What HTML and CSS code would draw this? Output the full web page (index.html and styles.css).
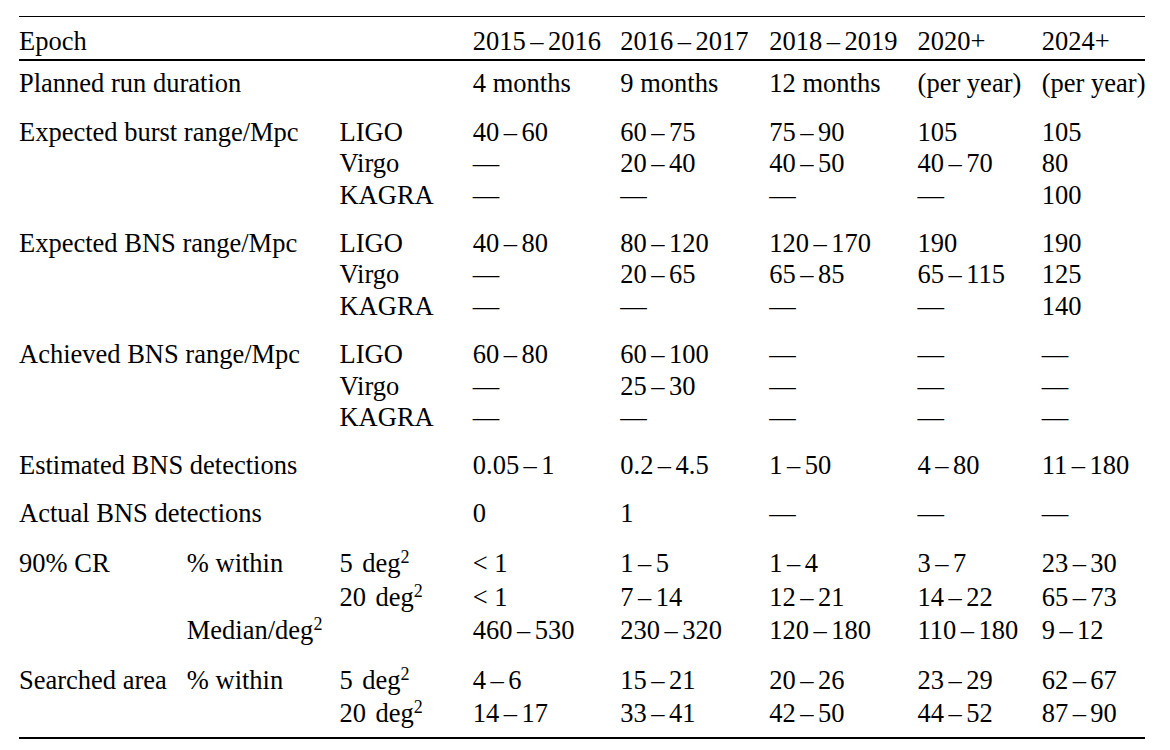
FILE: index.html
```html
<!DOCTYPE html>
<html lang="en">
<head>
<meta charset="utf-8">
<title>Observing scenarios</title>
<link rel="stylesheet" href="styles.css">
</head>
<body>
<table class="tbl">
  <colgroup>
    <col class="c1"><col class="c2"><col class="c3"><col class="c4"><col class="c5"><col class="c6"><col class="c7"><col class="c8">
  </colgroup>
  <thead>
    <tr>
      <th>Epoch</th><th></th><th></th>
      <th>2015<span class="d">–</span>2016</th>
      <th>2016<span class="d">–</span>2017</th>
      <th>2018<span class="d">–</span>2019</th>
      <th>2020+</th>
      <th>2024+</th>
    </tr>
  </thead>
  <tbody>
    <tr class="first">
      <td colspan="3">Planned run duration</td>
      <td>4 months</td><td>9 months</td><td>12 months</td><td>(per year)</td><td>(per year)</td>
    </tr>

    <tr class="grp">
      <td colspan="2">Expected burst range/Mpc</td><td>LIGO</td>
      <td>40<span class="d">–</span>60</td><td>60<span class="d">–</span>75</td><td>75<span class="d">–</span>90</td><td>105</td><td>105</td>
    </tr>
    <tr>
      <td></td><td></td><td>Virgo</td>
      <td>—</td><td>20<span class="d">–</span>40</td><td>40<span class="d">–</span>50</td><td>40<span class="d">–</span>70</td><td>80</td>
    </tr>
    <tr>
      <td></td><td></td><td>KAGRA</td>
      <td>—</td><td>—</td><td>—</td><td>—</td><td>100</td>
    </tr>

    <tr class="grp">
      <td colspan="2">Expected BNS range/Mpc</td><td>LIGO</td>
      <td>40<span class="d">–</span>80</td><td>80<span class="d">–</span>120</td><td>120<span class="d">–</span>170</td><td>190</td><td>190</td>
    </tr>
    <tr>
      <td></td><td></td><td>Virgo</td>
      <td>—</td><td>20<span class="d">–</span>65</td><td>65<span class="d">–</span>85</td><td>65<span class="d">–</span>115</td><td>125</td>
    </tr>
    <tr>
      <td></td><td></td><td>KAGRA</td>
      <td>—</td><td>—</td><td>—</td><td>—</td><td>140</td>
    </tr>

    <tr class="grp">
      <td colspan="2">Achieved BNS range/Mpc</td><td>LIGO</td>
      <td>60<span class="d">–</span>80</td><td>60<span class="d">–</span>100</td><td>—</td><td>—</td><td>—</td>
    </tr>
    <tr>
      <td></td><td></td><td>Virgo</td>
      <td>—</td><td>25<span class="d">–</span>30</td><td>—</td><td>—</td><td>—</td>
    </tr>
    <tr>
      <td></td><td></td><td>KAGRA</td>
      <td>—</td><td>—</td><td>—</td><td>—</td><td>—</td>
    </tr>

    <tr class="grp">
      <td colspan="3">Estimated BNS detections</td>
      <td>0.05<span class="d">–</span>1</td><td>0.2<span class="d">–</span>4.5</td><td>1<span class="d">–</span>50</td><td>4<span class="d">–</span>80</td><td>11<span class="d">–</span>180</td>
    </tr>

    <tr class="grp">
      <td colspan="3">Actual BNS detections</td>
      <td>0</td><td>1</td><td>—</td><td>—</td><td>—</td>
    </tr>

    <tr class="grp-sup">
      <td>90% CR</td><td>% within</td><td>5<span class="unit">deg<sup>2</sup></span></td>
      <td>&lt;&nbsp;1</td><td>1<span class="d">–</span>5</td><td>1<span class="d">–</span>4</td><td>3<span class="d">–</span>7</td><td>23<span class="d">–</span>30</td>
    </tr>
    <tr class="sup-row">
      <td></td><td></td><td>20<span class="unit">deg<sup>2</sup></span></td>
      <td>&lt;&nbsp;1</td><td>7<span class="d">–</span>14</td><td>12<span class="d">–</span>21</td><td>14<span class="d">–</span>22</td><td>65<span class="d">–</span>73</td>
    </tr>
    <tr class="sup-row">
      <td></td><td colspan="2">Median/deg<sup>2</sup></td>
      <td>460<span class="d">–</span>530</td><td>230<span class="d">–</span>320</td><td>120<span class="d">–</span>180</td><td>110<span class="d">–</span>180</td><td>9<span class="d">–</span>12</td>
    </tr>

    <tr class="grp-sup">
      <td>Searched area</td><td>% within</td><td>5<span class="unit">deg<sup>2</sup></span></td>
      <td>4<span class="d">–</span>6</td><td>15<span class="d">–</span>21</td><td>20<span class="d">–</span>26</td><td>23<span class="d">–</span>29</td><td>62<span class="d">–</span>67</td>
    </tr>
    <tr class="sup-row last">
      <td></td><td></td><td>20<span class="unit">deg<sup>2</sup></span></td>
      <td>14<span class="d">–</span>17</td><td>33<span class="d">–</span>41</td><td>42<span class="d">–</span>50</td><td>44<span class="d">–</span>52</td><td>87<span class="d">–</span>90</td>
    </tr>
  </tbody>
</table>
</body>
</html>
```

FILE: styles.css
```css
html, body {
  margin: 0;
  padding: 0;
  background: #ffffff;
}

body {
  color: #000000;
  font-family: "Liberation Serif", "Times New Roman", serif;
  font-size: 26.5px;
}

.tbl {
  margin: 16px 0 0 19px;
  width: 1125.5px;
  table-layout: fixed;
  border-collapse: separate;
  border-spacing: 0;
}

.c1 { width: 167.8px; }
.c2 { width: 152.7px; }
.c3 { width: 133.3px; }
.c4 { width: 147.5px; }
.c5 { width: 149px; }
.c6 { width: 148.3px; }
.c7 { width: 124.2px; }
.c8 { width: 102.7px; }

.tbl th,
.tbl td {
  padding: 0;
  line-height: 31.5px;
  text-align: left;
  font-weight: normal;
  white-space: nowrap;
  vertical-align: top;
}

.tbl thead th {
  border-top: 1px solid #000000;
  border-bottom: 2px solid #000000;
  padding-top: 9.1px;
  padding-bottom: 1.7px;
}

.tbl tr.first td { padding-top: 7.2px; }
.tbl tr.grp td { padding-top: 16.7px; }
.tbl tr.grp-sup td { padding-top: 18.5px; }
.tbl tr.sup-row td { padding-top: 1.8px; }

.tbl tr.last td {
  padding-bottom: 7.6px;
  border-bottom: 2px solid #000000;
}

.d {
  margin: 0 0.167em;
}

.unit {
  margin-left: 0.36em;
}

sup {
  font-size: 0.68em;
  line-height: 0;
  vertical-align: 0.48em;
}
```
